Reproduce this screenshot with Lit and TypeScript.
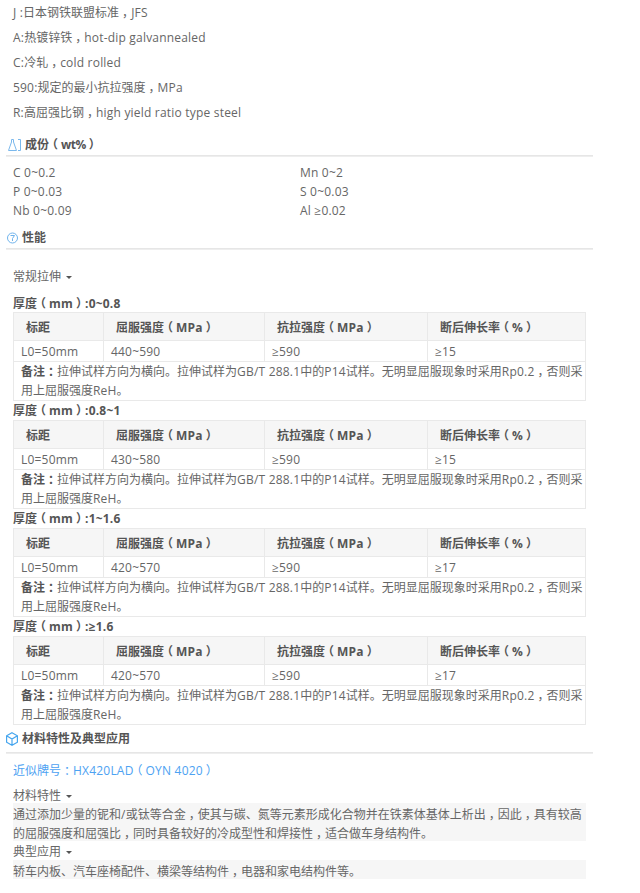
import { LitElement, html, css } from "lit";
import { customElement } from "lit/decorators.js";

const intro = [
  "J :日本钢铁联盟标准，JFS",
  "A:热镀锌铁，hot-dip galvannealed",
  "C:冷轧，cold rolled",
  "590:规定的最小抗拉强度，MPa",
  "R:高屈强比钢，high yield ratio type steel",
];
const comp = ["C 0~0.2", "Mn 0~2", "P 0~0.03", "S 0~0.03", "Nb 0~0.09", "Al ≥0.02"];
const tables = [
  { t: "厚度（mm）:0~0.8", y: "440~590", e: "≥15" },
  { t: "厚度（mm）:0.8~1", y: "430~580", e: "≥15" },
  { t: "厚度（mm）:1~1.6", y: "420~570", e: "≥17" },
  { t: "厚度（mm）:≥1.6", y: "420~570", e: "≥17" },
];
const caret = html`<span class="caret"></span>`;

/* Latin runs get the reference's wider tracking; full-width marks are set half-width and padded so they sit centred in their em. */
function fmt(s: string) {
  return s.split(/([，：（）]|[\x20-\x7e≥]+)/).filter(Boolean).map((part) => {
    if (/^[，：（）]$/.test(part)) return html`<span class="pc">${part}</span>`;
    if (/^[\x20-\x7e≥]+$/.test(part)) return html`<span class="lat">${part}</span>`;
    return part;
  });
}

@customElement("app-root")
export class AppRoot extends LitElement {
  static styles = css`
    :host { display: block; width: 640px; height: 893px; overflow: hidden; background: #fff; color: #666; font: 12px/19px "Open Sans", "Noto Sans CJK SC", sans-serif; }
    .wrap { padding: 0 47px 0 6px; }
    .lat { letter-spacing: 0.2px; }
    .pc { font-feature-settings: "halt"; padding: 0 3px; }
    .intro { padding: 3px 0 0 7px; }
    .intro p { margin: 0; height: 25px; line-height: 20px; }
    h3 { display: flex; align-items: center; box-sizing: border-box; margin: 0; font-size: 12px; font-weight: 700; color: #555; border-bottom: 1px solid #e6e6e6; box-shadow: 0 1px 0 #eee; }
    h3 svg { flex: none; }
    h3 .lat { letter-spacing: -0.5px; }
    .h1 { margin-top: 5px; height: 23px; padding: 1px 0 0 2px; gap: 4px; }
    .comp { display: grid; grid-template-columns: 287px 1fr; padding: 7px 0 0 7px; }
    .h2 { margin-top: 7px; height: 22px; padding-left: 1px; gap: 4px; }
    .sub { padding: 0 0 0 7px; display: flex; align-items: center; gap: 5px; box-sizing: border-box; }
    .s1 { margin-top: 18px; height: 19px; }
    .caret { width: 0; height: 0; border: 3px solid transparent; border-top: 3px solid #555; border-bottom: 0; margin-top: 2px; }
    .thick { margin-left: 7px; font-weight: 700; color: #555; }
    .thick.first { margin-top: 9px; height: 17px; line-height: 17px; }
    .thick.next { height: 19px; line-height: 20px; }
    table { margin-left: 7px; width: 573px; border-collapse: collapse; table-layout: fixed; border: 1px solid #e9e9e9; }
    th, td { border: 1px solid #e9e9e9; text-align: left; padding: 1px 0 0 7px; font-weight: 400; box-sizing: border-box; }
    th { height: 28px; background: #f6f6f6; padding: 1px 0 0 12px; font-weight: 700; color: #555; }
    td { height: 20px; }
    td.note { padding: 0 0 0 7px; height: 39px; line-height: 19px; }
    .note b { color: #555; }
    .h3 { height: 28px; gap: 4px; }
    .link { margin: 8px 0 0 7px; color: #4da2f2; height: 20px; line-height: 20px; }
    .s2 { margin-top: 6px; height: 16px; }
    .s3 { height: 19px; padding-top: 2px; }
    .block { margin-left: 7px; width: 573px; background: #f6f6f6; box-sizing: border-box; padding-top: 2px; }
    .b1 { height: 38px; }
    .b2 { height: 19px; }
  `;
  private table(t: { t: string; y: string; e: string }, i: number) {
    return html`
      <div class="thick ${i ? "next" : "first"}">${fmt(t.t)}</div>
      <table>
        <colgroup><col style="width:90px" /><col style="width:161px" /><col style="width:163px" /><col /></colgroup>
        <tr><th>标距</th><th>${fmt("屈服强度（MPa）")}</th><th>${fmt("抗拉强度（MPa）")}</th><th>${fmt("断后伸长率（%）")}</th></tr>
        <tr><td>${fmt("L0=50mm")}</td><td>${fmt(t.y)}</td><td>${fmt("≥590")}</td><td>${fmt(t.e)}</td></tr>
        <tr><td class="note" colspan="4"><b>${fmt("备注：")}</b>${fmt("拉伸试样方向为横向。拉伸试样为GB/T 288.1中的P14试样。无明显屈服现象时采用Rp0.2，否则采")}<br />${fmt("用上屈服强度ReH。")}</td></tr>
      </table>`;
  }
  render() {
    return html`<div class="wrap">
      <div class="intro">${intro.map((s) => html`<p>${fmt(s)}</p>`)}</div>
      <h3 class="h1">
        <svg width="13" height="12" viewBox="0 0 13 12" fill="none" stroke="#7ab8ec" stroke-width="1"><path d="M3.5 .5H5.5V3L8.5 11.5H.5L3.5 3ZM10 .5H12.5V11.5H10" /></svg>
        <span>${fmt("成份（wt%）")}</span>
      </h3>
      <div class="comp">${comp.map((c) => html`<div>${fmt(c)}</div>`)}</div>
      <h3 class="h2">
        <svg width="11" height="12" viewBox="0 0 11 12" fill="none" stroke="#6fb3ec" stroke-width="1"><circle cx="5.5" cy="6" r="5" /><path d="M3.5 3.5H7.5L5.5 6.5V9" /></svg>
        性能
      </h3>
      <div class="sub s1">常规拉伸 ${caret}</div>
      ${tables.map((t, i) => this.table(t, i))}
      <h3 class="h3">
        <svg width="12" height="14" viewBox="0 0 12 14" fill="none" stroke="#45a5ee" stroke-width="1.2"><path d="M6 .8 11.4 3.8V10.2L6 13.2 .6 10.2V3.8ZM.6 3.8 6 7 11.4 3.8M6 7V13.2" /></svg>
        材料特性及典型应用
      </h3>
      <div class="link">${fmt("近似牌号：HX420LAD（OYN 4020）")}</div>
      <div class="sub s2">材料特性 ${caret}</div>
      <div class="block b1">${fmt("通过添加少量的铌和/或钛等合金，使其与碳、氮等元素形成化合物并在铁素体基体上析出，因此，具有较高")}<br />${fmt("的屈服强度和屈强比，同时具备较好的冷成型性和焊接性，适合做车身结构件。")}</div>
      <div class="sub s3">典型应用 ${caret}</div>
      <div class="block b2">${fmt("轿车内板、汽车座椅配件、横梁等结构件，电器和家电结构件等。")}</div>
    </div>`;
  }
}
